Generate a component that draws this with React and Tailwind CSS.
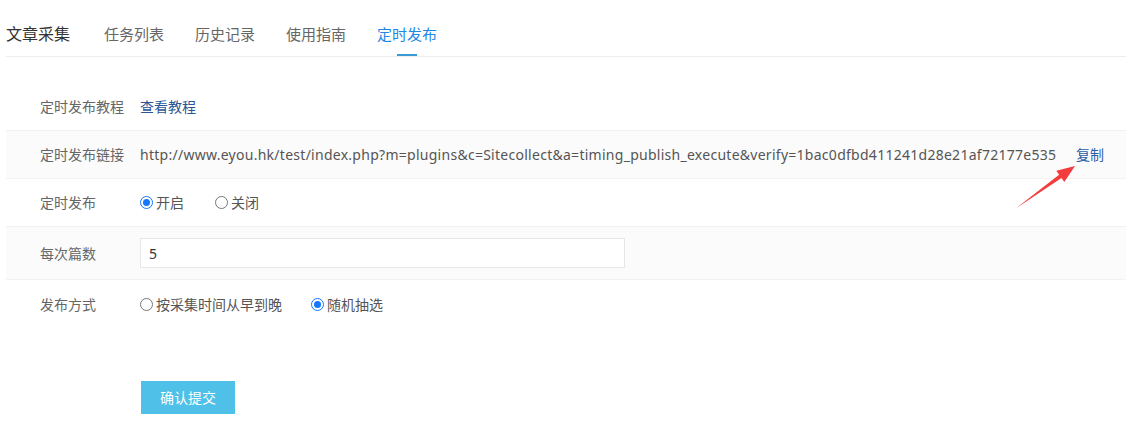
import React from 'react';

const font = { fontFamily: '"Noto Sans", "Noto Sans CJK SC", sans-serif' };

const tabs = ['任务列表', '历史记录', '使用指南'];

const Radio = ({ checked, label }) => (
  <label className="flex items-center text-[14px] text-[#555]">
    {checked ? (
      <span className="w-[13px] h-[13px] rounded-full border border-[#1677ff] flex items-center justify-center">
        <span className="w-[7px] h-[7px] rounded-full bg-[#1677ff]" />
      </span>
    ) : (
      <span className="w-[13px] h-[13px] rounded-full border border-[#777] bg-white" />
    )}
    <span className="ml-[3px]">{label}</span>
  </label>
);

const Row = ({ label, bg, last, h = 'h-[48px]', children }) => (
  <div className={`flex items-center ${h} ${last ? '' : 'border-b border-[#f2f2f2]'} ${bg ? 'bg-[#fbfbfb]' : 'bg-white'}`}>
    <div className="w-[134px] pl-[34px] text-[14px] text-[#666] shrink-0">{label}</div>
    <div className="flex items-center flex-1">{children}</div>
  </div>
);

export default function App() {
  return (
    <div className="relative w-[1126px] h-[428px] bg-white pl-[6px] overflow-hidden" style={font}>
      <div className="flex items-end h-[57px] border-b border-[#eeeeee]">
        <div className="w-[64px] text-[16px] text-[#333] leading-[22px] pb-[11px]">文章采集</div>
        {tabs.map((t, i) => (
          <div key={t} className={`w-[60px] text-[15px] text-[#666] leading-[22px] pb-[11px] ${i === 0 ? 'ml-[34px]' : 'ml-[31px]'}`}>{t}</div>
        ))}
        <div className="ml-[31px] w-[60px] flex flex-col items-center">
          <div className="text-[15px] text-[#1e88e5] leading-[22px] pb-[9px]">定时发布</div>
          <div className="w-[20px] h-[2px] bg-[#3a9bd5]" />
        </div>
      </div>

      <div className="mt-[26px]">
        <Row label="定时发布教程">
          <span className="text-[14px] text-[#2a5596]">查看教程</span>
        </Row>
        <Row label="定时发布链接" bg>
          <span className="text-[14px] text-[#555] tracking-[0.27px]">http://www.eyou.hk/test/index.php?m=plugins&amp;c=Sitecollect&amp;a=timing_publish_execute&amp;verify=1bac0dfbd411241d28e21af72177e535</span>
          <span className="ml-auto mr-[22px] text-[14px] text-[#2a5fa8]">复制</span>
        </Row>
        <Row label="定时发布">
          <div className="flex gap-[31px]">
            <Radio checked label="开启" />
            <Radio label="关闭" />
          </div>
        </Row>
        <Row label="每次篇数" bg h="h-[53px]">
          <div className="w-[485px] h-[30px] border border-[#e6e6e6] bg-white flex items-center pl-[8px] text-[14px] text-[#333]">5</div>
        </Row>
        <Row label="发布方式" last>
          <div className="flex gap-[29px]">
            <Radio label="按采集时间从早到晚" />
            <Radio checked label="随机抽选" />
          </div>
        </Row>
      </div>

      <div className="mt-[53px] ml-[135px] w-[94px] h-[33px] bg-[#4fc0e8] flex items-center justify-center text-[14px] text-white">确认提交</div>

      <svg className="absolute left-[1010px] top-[160px]" width="70" height="52" viewBox="0 0 70 52">
        <polygon points="7,47.6 49.1,14.8 46.3,10.7 65,6 54.3,22.1 51.5,18 7.6,47.2" fill="#f43c3c" />
      </svg>
    </div>
  );
}
